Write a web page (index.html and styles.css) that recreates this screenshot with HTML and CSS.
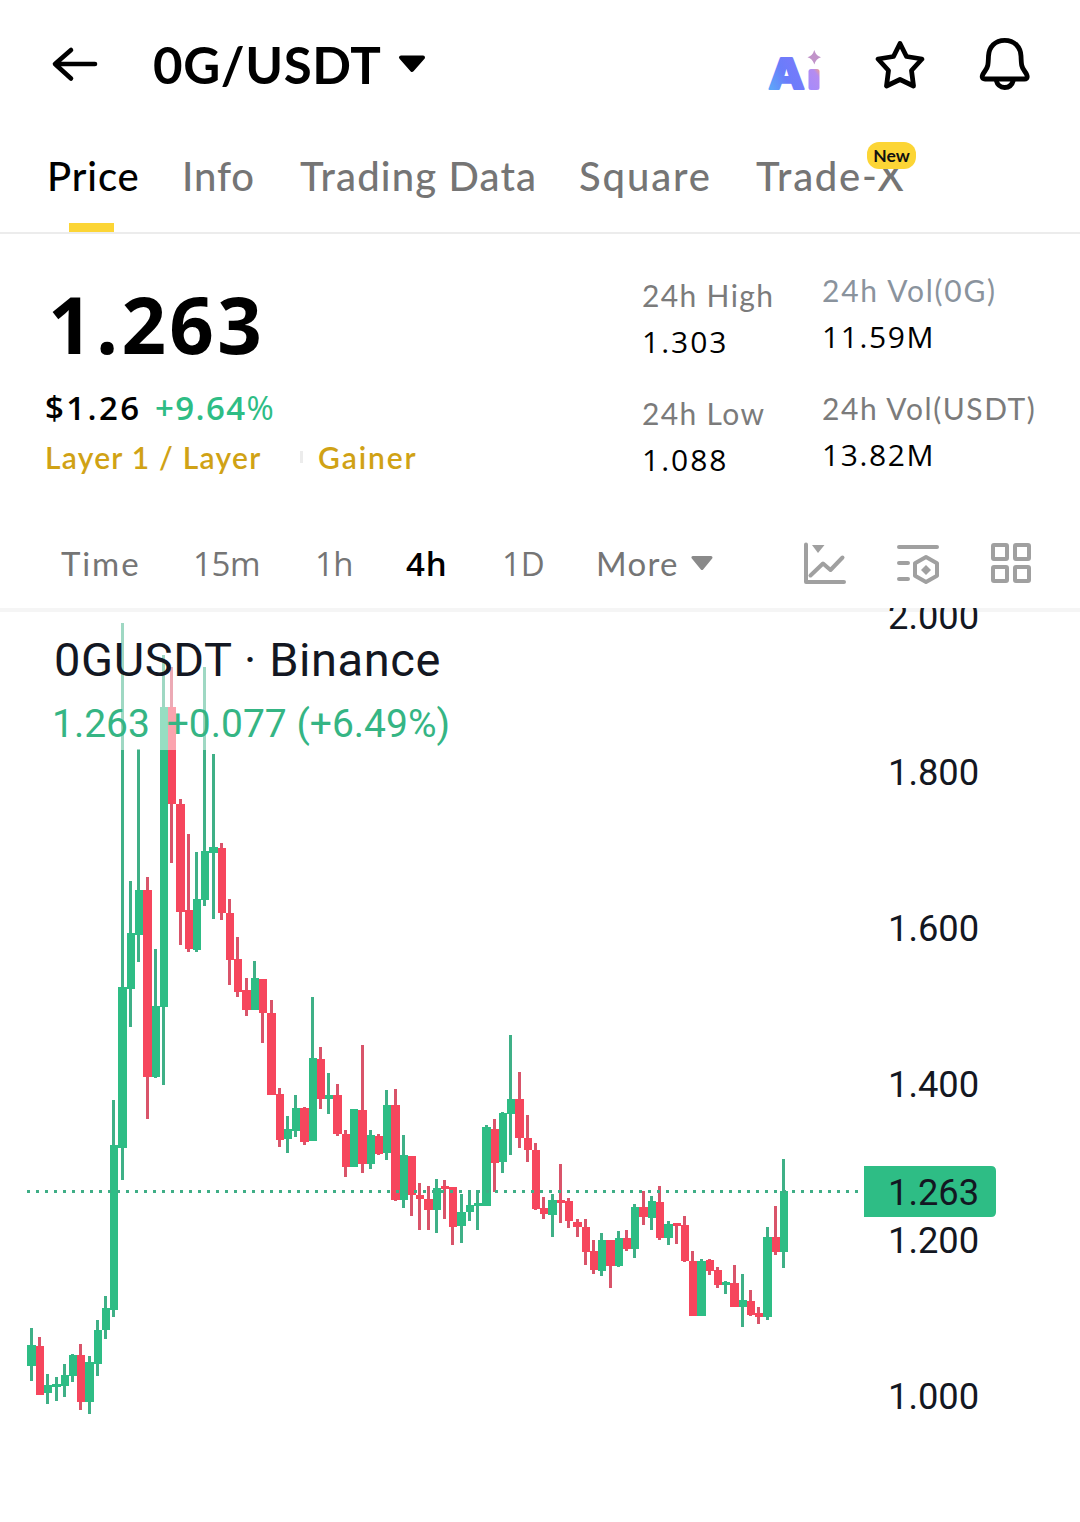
FILE: index.html
```html
<!DOCTYPE html>
<html lang="en">
<head>
<meta charset="utf-8">
<title>0G/USDT</title>
<link rel="stylesheet" href="styles.css">
</head>
<body>
<header class="topbar">
  <svg class="back" width="50" height="40" viewBox="50 44 50 40"><path d="M71 50 55 64 71 78.500M56 64H95"/></svg>
  <h1 class="pair">0G/USDT</h1>
  <svg class="caret" width="28" height="20" viewBox="398 54 28 20"><path d="M401 57.500H423L412 70Z"/></svg>
  <div class="actions">
    <svg width="56" height="48" viewBox="767 46 56 48">
      <defs>
        <linearGradient id="ga" x1="0" y1="1" x2="1" y2="0.300"><stop offset="0" stop-color="#58b4f8"/><stop offset=".5" stop-color="#6a7dfa"/><stop offset="1" stop-color="#7c78fb"/></linearGradient>
        <linearGradient id="gi" x1="1" y1="0" x2="0.300" y2="1"><stop offset="0" stop-color="#f0a08c"/><stop offset=".3" stop-color="#b48cf0"/><stop offset="1" stop-color="#a78bfa"/></linearGradient>
      </defs>
      <text class="logo-a" x="769.500" y="88.500" textLength="36" lengthAdjust="spacingAndGlyphs">A</text>
      <rect x="809.500" y="69" width="11" height="21" rx="2.500" fill="url(#gi)"/>
      <path d="M815.300 50Q817 56 822 57.200 817 58.700 815.300 64.500 813.600 58.700 808.500 57.200 813.600 56 815.300 50Z" fill="#c193c9"/>
    </svg>
    <svg class="line" width="54" height="52" viewBox="873 39 54 52"><path d="M900 43.500 906.500 56.500 922 59 911.500 70.500 913.500 86 900 79.500 886.500 86 888.500 70.500 878 59 893.500 56.500Z"/></svg>
    <svg class="line" width="54" height="56" viewBox="978 36 54 56"><path d="M1004.700 40.300C995 40.300 989 47 988.500 56C988.200 65 988 67 985 71C982.500 74.500 982 75.500 982.200 77Q982.500 79 985 79H1024.500Q1027 79 1027.200 77C1027.400 75.500 1027 74.500 1024.500 71C1021.500 67 1021.300 65 1021 56C1020.500 47 1014.500 40.300 1004.700 40.300ZM996 80Q998 87.500 1004.700 87.500T1013.500 80"/></svg>
  </div>
</header>

<nav class="tabs">
  <a class="tab active t1">Price</a>
  <a class="tab t2">Info</a>
  <a class="tab t3">Trading Data</a>
  <a class="tab t4">Square</a>
  <a class="tab t5">Trade-X<span class="badge">New</span></a>
</nav>

<section class="summary">
  <div class="quote">
    <div class="last">1.263</div>
    <div class="fiat"><span class="usd">$1.26</span><span class="change">+9.64<i>%</i></span></div>
    <div class="tags"><span class="tag1">Layer 1 / Layer</span><span class="sep"></span><span class="tag2">Gainer</span></div>
  </div>
  <dl class="stats range">
    <dt class="s1">24h High</dt><dd>1.303</dd>
    <dt class="s2">24h Low</dt><dd>1.088</dd>
  </dl>
  <dl class="stats volume">
    <dt class="s3 cool">24h Vol(0G)</dt><dd class="vol">11.59M</dd>
    <dt class="s4">24h Vol(USDT)</dt><dd class="vol">13.82M</dd>
  </dl>
</section>

<div class="intervals">
  <span class="i1">Time</span><span class="i2">15m</span><span class="i3">1h</span><span class="i4 on">4h</span><span class="i5">1D</span><span class="i6">More</span>
  <svg class="more" width="22" height="16" viewBox="691 555 22 16"><path d="M693 557.500H711L702 568.500Z"/></svg>
  <div class="tools">
    <svg width="46" height="46" viewBox="802 540 46 46"><path class="s" d="M806 544.500V582H844M810.500 575.500 823 563.500 830.500 570 842.500 557.500"/><path class="f" d="M812 545H824.500L818 553Z"/></svg>
    <svg width="46" height="46" viewBox="895 540 46 46"><path class="s" d="M899 547H937M899 563H908M899 579H908M926 557 937 563.300V575.700L926 582 915 575.700V563.300Z"/><path class="f" d="M926 565 931 570 926 575 921 570Z"/></svg>
    <svg width="46" height="46" viewBox="988 540 46 46"><g class="s"><rect x="993" y="545" width="14" height="14" rx="1"/><rect x="1015" y="545" width="14" height="14" rx="1"/><rect x="993" y="567" width="14" height="14" rx="1"/><rect x="1015" y="567" width="14" height="14" rx="1"/></g></svg>
  </div>
</div>

<main class="chart">
  <svg class="plot" width="1080" height="914" viewBox="0 608 1080 914" shape-rendering="crispEdges">
    <rect y="608" width="1080" height="4" fill="#f5f5f5"/>
    <g id="candles"></g>
    <path class="price-line" d="M27 1191.500H860"/>
    <rect x="0" y="612" width="466" height="138" fill="#fff" fill-opacity=".5"/>
    <path fill="#2ebd85" shape-rendering="auto" d="M864 1166H991Q996 1166 996 1171V1212Q996 1217 991 1217H864Z"/>
    <g class="axis">
      <text x="888" y="629">2.000</text>
      <text x="888" y="785">1.800</text>
      <text x="888" y="941">1.600</text>
      <text x="888" y="1097">1.400</text>
      <text x="888" y="1205">1.263</text>
      <text x="888" y="1253">1.200</text>
      <text x="888" y="1409">1.000</text>
    </g>
  </svg>
  <div class="legend">
    <div class="symbol">0GUSDT · Binance</div>
    <div class="delta">1.263 <span>+0.077 (+6.49%)</span></div>
  </div>
</main>
<script src="chart.js"></script>
</body>
</html>
```
FILE: styles.css
```css
* { box-sizing: border-box; }
body { margin: 0; width: 1080px; height: 1522px; overflow: hidden; background: #fff; color: #000; font-family: Lato, "Open Sans", sans-serif; }
svg { display: block; flex: none; }

.topbar { display: flex; align-items: center; height: 128px; padding: 0 48px 0 50px; }
.back path { fill: none; stroke: #000; stroke-width: 4.6; stroke-linecap: round; stroke-linejoin: round; }
.pair { margin: 0 0 0 53px; padding-top: 1px; width: 245px; font-size: 51px; line-height: 60px; font-weight: 700; letter-spacing: .6px; white-space: nowrap; }
.caret path { stroke: #000; stroke-width: 4; stroke-linejoin: round; }
.actions { display: flex; align-items: center; gap: 51px; margin-left: auto; height: 56px; }
.actions svg:first-child { margin-top: 11px; overflow: visible; }
.actions svg:nth-child(2) { margin-top: 2px; }
.line path { fill: none; stroke: #000; stroke-width: 4.8; stroke-linejoin: round; stroke-linecap: round; }
.logo-a { font: 800 43px Inter, sans-serif; fill: url(#ga); stroke: url(#ga); stroke-width: 2.2; stroke-linejoin: round; }

.tabs { display: grid; grid-template-columns: 135px 118px 279px 177px 160px; height: 106px; padding: 18px 0 0 47px; border-bottom: 2px solid #ececec; font-size: 40px; line-height: 60px; color: #757575; white-space: nowrap; font-weight: 500; }
.tab { position: relative; justify-self: start; height: 86px; }
.t1 { letter-spacing: .9px; }
.t2 { letter-spacing: .9px; }
.t3 { letter-spacing: 1.15px; }
.t4 { letter-spacing: 1.9px; }
.t5 { letter-spacing: 1.7px; }
.active { color: #000; }
.active::after { content: ""; position: absolute; left: 22px; bottom: 0; width: 45px; height: 9px; background: #fcd535; }
.badge { position: absolute; left: 111px; top: -4px; width: 49px; height: 27px; border-radius: 12px; background: #fcd535; color: #111; font-size: 17.5px; line-height: 27px; font-weight: 700; text-align: center; letter-spacing: 0; }

.summary { display: flex; height: 286px; white-space: nowrap; }
.quote { width: 642px; padding: 44px 0 0 45px; }
.last { margin-left: 3px; font: 700 78px/92px "Open Sans", sans-serif; letter-spacing: 3.3px; }
.fiat { display: flex; font: 600 33px/50px "Open Sans", sans-serif; margin-top: 13px; }
.usd { width: 110px; letter-spacing: 2.4px; }
.change { color: #2ebd85; letter-spacing: 1.4px; }
.change i { font-style: normal; font-weight: 400; }
.tags { display: flex; align-items: center; font-size: 30px; line-height: 48px; font-weight: 600; color: #d0a215; }
.tag1 { width: 255px; letter-spacing: 1.25px; }
.tag2 { letter-spacing: 1.9px; }
.sep { width: 3px; height: 12px; margin-right: 15px; background: #ececec; }
.stats { margin: 0; width: 180px; }
.range { padding-top: 38px; }
.volume { padding-top: 33px; width: 240px; }
.stats dt { font-size: 30px; line-height: 46px; color: #7b7b7b; }
.stats dt.cool { color: #8a939d; }
.stats dd { margin: 0 0 25px; font: 400 30px/47px "Open Sans", sans-serif; letter-spacing: 2px; }
.s1, .s2 { letter-spacing: 1.35px; }
.s3 { letter-spacing: 1.75px; }
.s4 { letter-spacing: 1.55px; }
.stats .vol { letter-spacing: 1.6px; }

.intervals { display: flex; align-items: center; height: 88px; font: 400 33px/50px "Open Sans", sans-serif; color: #757575; }
.intervals span { flex: none; }
.i1 { width: 132px; margin-left: 61px; letter-spacing: 1.9px; }
.i2 { width: 122px; letter-spacing: -.4px; }
.i3 { width: 91px; letter-spacing: -.6px; }
.i4 { width: 96px; letter-spacing: 1px; }
.i5 { width: 94px; }
.i6 { width: 95px; letter-spacing: 1.3px; }
.intervals .on { color: #000; font-weight: 600; }
.intervals .i1, .intervals .i6 { font-family: Lato, sans-serif; padding-bottom: 2px; }
.more { margin-bottom: 2px; }
.more path { fill: #8a8a8a; stroke: #8a8a8a; stroke-width: 3; stroke-linejoin: round; }
.tools { display: flex; gap: 47px; margin: 0 46px 2px auto; }
.tools .s { fill: none; stroke: #a0a0a0; stroke-width: 4; stroke-linecap: round; stroke-linejoin: round; }
.tools .f { fill: #a0a0a0; }

.chart { position: relative; height: 914px; }
.plot { position: absolute; left: 0; top: 0; }
.axis { font: 400 36.3px Roboto, sans-serif; fill: #131722; }
.price-line { stroke: #3fae86; stroke-width: 3; stroke-dasharray: 3 6; }
.legend { position: relative; padding: 19px 0 0 52px; font-family: Roboto, sans-serif; white-space: nowrap; }
.symbol { margin-left: 2px; font-size: 47px; line-height: 66px; letter-spacing: .6px; color: #131722; }
.delta { padding-top: 1px; font-size: 39px; line-height: 60px; color: #35b584; }
.delta span { margin-left: 7px; }
.up .body { fill: #2ebd85; }
.up .wick { fill: #3fb087; }
.down .body { fill: #f6465d; }
.down .wick { fill: #d9546a; }
```
FILE: chart.js
```js
// Each candle: direction, then high, body top, body bottom and low in plot units.
const data = `
g 1328 1345 1366 1381|r 1337 1346 1395 1395|g 1374 1385 1393 1404|g 1377 1384 1387 1401|g 1364 1375 1386 1397
g 1354 1355 1376 1382|r 1344 1355 1402 1410|g 1356 1362 1402 1414|g 1320 1330 1364 1376|g 1296 1308 1330 1339
g 1100 1145 1310 1317|g 623 987 1148 1180|g 881 933 989 1027|g 749 890 935 962|r 877 890 1077 1119
g 949 1006 1077 1078|g 655 707 1007 1085|r 667 707 804 863|r 799 804 912 945|r 834 910 949 952
g 852 899 950 952|g 667 851 900 906|g 754 847 853 919|r 843 848 913 920|r 899 913 960 985
r 937 959 992 997|r 978 990 1010 1016|g 961 978 1010 1010|r 979 979 1013 1043|r 1000 1013 1095 1095
r 1088 1094 1140 1147|g 1116 1129 1139 1153|g 1095 1108 1131 1137|r 1107 1108 1142 1145|g 997 1058 1141 1141
r 1047 1059 1099 1109|g 1073 1095 1099 1114|r 1084 1095 1134 1136|r 1130 1134 1167 1177|g 1109 1109 1167 1167
r 1045 1110 1164 1173|g 1130 1135 1164 1169|r 1134 1136 1154 1155|g 1090 1105 1153 1160|r 1089 1105 1200 1201
g 1135 1155 1200 1208|r 1156 1156 1195 1216|r 1183 1195 1199 1230|r 1186 1199 1210 1230|g 1179 1188 1210 1233
r 1180 1186 1189 1219|r 1187 1187 1227 1245|g 1194 1212 1226 1243|g 1190 1205 1212 1221|g 1190 1203 1206 1230
g 1125 1127 1206 1206|r 1119 1129 1163 1192|g 1112 1113 1162 1173|g 1035 1099 1114 1155|r 1072 1099 1138 1148
r 1115 1138 1150 1162|r 1143 1150 1209 1210|r 1197 1208 1214 1219|g 1194 1200 1215 1237|r 1164 1200 1203 1223
r 1198 1201 1221 1228|r 1219 1222 1227 1237|r 1219 1227 1252 1265|r 1240 1251 1270 1274|g 1233 1240 1271 1276
r 1240 1240 1266 1288|g 1231 1238 1266 1267|r 1230 1238 1249 1251|g 1204 1207 1249 1258|r 1191 1207 1217 1225
g 1196 1201 1218 1230|r 1186 1202 1238 1240|g 1221 1224 1238 1245|r 1223 1223 1226 1244|r 1216 1225 1261 1262
r 1251 1261 1316 1316|g 1259 1261 1316 1316|r 1259 1260 1271 1275|r 1267 1270 1285 1288|g 1281 1282 1285 1294
r 1265 1283 1307 1307|g 1274 1300 1307 1327|r 1290 1301 1315 1316|r 1307 1313 1317 1324|g 1227 1237 1317 1320
r 1206 1237 1252 1255|g 1159 1191 1252 1268`.trim().split(/[|\n]/);

const edge = i => Math.round(27.46 + 8.27 * i);
document.getElementById('candles').innerHTML = data.map((row, i) => {
  const [dir, high, top, bottom, low] = row.split(' ');
  const left = edge(i), right = edge(i + 1);
  const wick = Math.ceil((left + right) / 2) - 2;
  return `<g class="${dir === 'g' ? 'up' : 'down'}">` +
    `<rect class="wick" x="${wick}" y="${high}" width="3" height="${low - high}"/>` +
    `<rect class="body" x="${left}" y="${top}" width="${right - left}" height="${bottom - top}"/></g>`;
}).join('');
```
